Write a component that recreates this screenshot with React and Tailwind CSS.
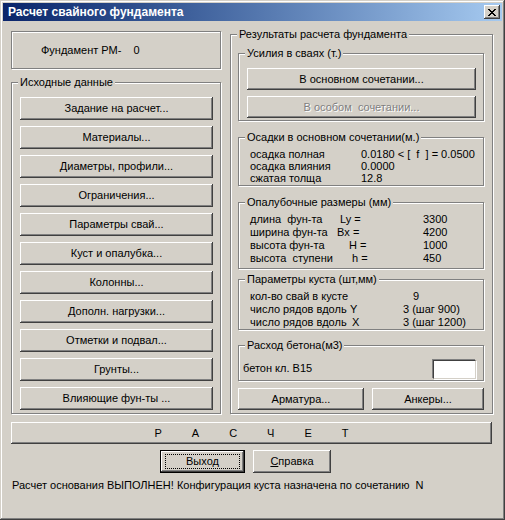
import React from "react";

const raised =
  "shadow-[inset_-1px_-1px_0_#404040,inset_1px_1px_0_#ffffff,inset_-2px_-2px_0_#808080,inset_2px_2px_0_#d4d0c8]";
const etched = "border border-[#808080] shadow-[1px_1px_0_#ffffff,inset_1px_1px_0_#ffffff]";

function Button({ children, className = "", disabled }) {
  return (
    <button
      type="button"
      className={`flex items-center justify-center bg-[#d4d0c8] leading-[13px] ${raised} ${
        disabled ? "text-[#808080] [text-shadow:1px_1px_0_#ffffff]" : "text-black"
      } ${className}`}
    >
      {children}
    </button>
  );
}

function Group({ label, className = "", children }) {
  return (
    <div className={`relative ${etched} ${className}`}>
      <span className="absolute -top-[7px] left-[6px] bg-[#d4d0c8] px-[2px] leading-[13px]">
        {label}
      </span>
      {children}
    </div>
  );
}

const leftButtons = [
  "Задание на расчет...",
  "Материалы...",
  "Диаметры, профили...",
  "Ограничения...",
  "Параметры свай...",
  "Куст и опалубка...",
  "Колонны...",
  "Дополн. нагрузки...",
  "Отметки и подвал...",
  "Грунты...",
  "Влияющие фун-ты ...",
];

const forms = [
  { label: "длина  фун-та", sym: "Ly =", pad: "pl-[3px]", value: "3300" },
  { label: "ширина фун-та", sym: "Bx =", pad: "pl-0", value: "4200" },
  { label: "высота фун-та", sym: "H =", pad: "pl-[12px]", value: "1000" },
  { label: "высота  ступени", sym: "h =", pad: "pl-[15px]", value: "450" },
];

export default function App() {
  return (
    <div className="w-[505px] h-[520px] bg-[#d4d0c8] p-[3px] text-[11px] text-black font-['Liberation_Sans',Arial,sans-serif] shadow-[inset_-1px_-1px_0_#404040,inset_1px_1px_0_#d4d0c8,inset_-2px_-2px_0_#808080,inset_2px_2px_0_#ffffff]">
      <div className="flex h-[18px] items-center justify-between bg-linear-to-r from-[#0a246a] to-[#a6caf0] pl-[5px] pr-[2px]">
        <span className="text-[12px] font-bold text-white whitespace-pre">Расчет свайного фундамента</span>
        <button type="button" className={`flex h-[14px] w-[16px] items-center justify-center bg-[#d4d0c8] ${raised}`}>
          <svg width="8" height="7" viewBox="0 0 8 7" shapeRendering="crispEdges">
            <path
              d="M0 0h2v1h-2zM6 0h2v1h-2zM1 1h2v1h-2zM5 1h2v1h-2zM2 2h4v1h-4zM3 3h2v1h-2zM2 4h4v1h-4zM1 5h2v1h-2zM5 5h2v1h-2zM0 6h2v1h-2zM6 6h2v1h-2z"
              fill="#000"
            />
          </svg>
        </button>
      </div>

      <div className="px-[8px]">
        <div className="mt-[10px] flex items-start gap-[9px]">
          <div className="w-[210px]">
            <div className={`flex h-[38px] items-center pl-[29px] ${etched}`}>
              <span>Фундамент РМ-</span>
              <span className="ml-[12px]">0</span>
            </div>
            <Group label="Исходные данные" className="mt-[13px] h-[332px] pl-[8px] pr-[7px] pt-[14px]">
              <div className="flex flex-col gap-[6px]">
                {leftButtons.map((t) => (
                  <Button key={t} className="h-[23px] w-full">
                    {t}
                  </Button>
                ))}
              </div>
            </Group>
          </div>

          <Group label="Результаты расчета фундамента" className="mt-[3px] h-[380px] w-[263px] pl-[7px] pr-[8px] pt-[18px]">
            <Group label="Усилия в сваях (т.)" className="h-[68px] pl-[8px] pr-[7px] pt-[14px]">
              <div className="flex flex-col gap-[6px]">
                <Button className="h-[22px] w-full">В основном сочетании...</Button>
                <Button className="h-[22px] w-full" disabled>
                  <span className="whitespace-pre">В особом  сочетании...</span>
                </Button>
              </div>
            </Group>

            <Group label="Осадки в основном сочетании(м.)" className="mt-[16px] h-[49px] pl-[11px] pt-[10px]">
              <div className="leading-[12px]">
                <div className="flex">
                  <span className="w-[111px]">осадка полная</span>
                  <span className="whitespace-pre">0.0180 &lt; [  f  ] = 0.0500</span>
                </div>
                <div className="flex">
                  <span className="w-[111px]">осадка влияния</span>
                  <span>0.0000</span>
                </div>
                <div className="flex">
                  <span className="w-[111px]">сжатая толща</span>
                  <span>12.8</span>
                </div>
              </div>
            </Group>

            <Group label="Опалубочные размеры (мм)" className="mt-[16px] h-[67px] pl-[11px] pt-[10px]">
              <div className="leading-[13px]">
                {forms.map((r) => (
                  <div key={r.label} className="flex">
                    <span className="w-[87px] whitespace-pre">{r.label}</span>
                    <span className={`w-[86px] ${r.pad}`}>{r.sym}</span>
                    <span>{r.value}</span>
                  </div>
                ))}
              </div>
            </Group>

            <Group label="Параметры куста (шт,мм)" className="mt-[10px] h-[51px] pl-[11px] pt-[10px]">
              <div className="grid grid-cols-[100px_53px_auto] leading-[13px]">
                <span className="col-span-2">кол-во свай в кусте</span>
                <span className="pl-[10px]">9</span>
                <span>число рядов вдоль</span>
                <span>Y</span>
                <span>3 (шаг 900)</span>
                <span>число рядов вдоль</span>
                <span className="pl-[2px]">X</span>
                <span>3 (шаг 1200)</span>
              </div>
            </Group>

            <Group label="Расход бетона(м3)" className="mt-[15px] flex h-[36px] items-end justify-between pb-[1px] pl-[4px] pr-[7px]">
              <span className="mb-[3px]">бетон кл. B15</span>
              <div className="h-[19px] w-[43px] border border-t-[#404040] border-l-[#404040] border-r-[#d4d0c8] border-b-[#d4d0c8] bg-white shadow-[1px_1px_0_#ffffff,-1px_-1px_0_#808080]" />
            </Group>

            <div className="mt-[7px] flex gap-[8px]">
              <Button className="h-[22px] w-[126px]">Арматура...</Button>
              <Button className="h-[22px] w-[112px]">Анкеры...</Button>
            </div>
          </Group>
        </div>

        <Button className="mt-[8px] h-[22px] w-[481px] gap-[30px]">
          <span>Р</span>
          <span>А</span>
          <span>С</span>
          <span>Ч</span>
          <span>Е</span>
          <span>Т</span>
        </Button>

        <div className="mt-[6px] flex gap-[8px] pl-[149px]">
          <div className="h-[23px] w-[85px] border border-black">
            <Button className="h-full w-full">
              <span className="flex h-[15px] w-[75px] items-center justify-center border border-dotted border-black">
                Выход
              </span>
            </Button>
          </div>
          <Button className="h-[23px] w-[78px]">
            <span>
              <span className="underline">С</span>правка
            </span>
          </Button>
        </div>

        <div className="mt-[6px] pl-[1px] leading-[13px] whitespace-pre">
          Расчет основания ВЫПОЛНЕН! Конфигурация куста назначена по сочетанию  N
        </div>
      </div>
    </div>
  );
}
